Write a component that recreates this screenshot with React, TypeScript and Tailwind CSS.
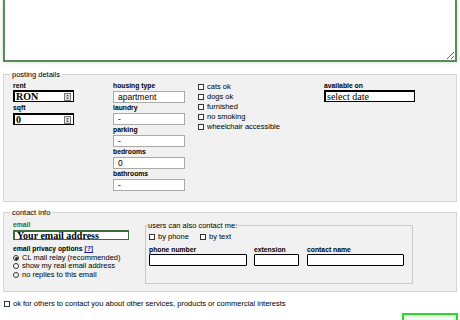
import React from 'react';

const lbl = 'block text-[6.8px] font-bold leading-[8px]';
const serif = "font-['Liberation_Serif',serif]";

const Box = ({ children }: { children: React.ReactNode }) => (
  <div className="flex items-center leading-[10px]">
    <span className="mr-[3px] inline-block h-[6px] w-[6px] border border-[#333] bg-white" />
    <span className="text-[7.5px]">{children}</span>
  </div>
);

const Radio = ({ checked, children }: { checked?: boolean; children: React.ReactNode }) => (
  <div className="flex items-center leading-[8.3px]">
    <span className="mr-[3px] flex h-[6px] w-[6px] items-center justify-center rounded-full border border-[#333] bg-white">
      {checked && <span className="h-[3px] w-[3px] rounded-full bg-[#222]" />}
    </span>
    <span className="text-[7.5px]">{children}</span>
  </div>
);

const Spinner = () => (
  <svg width="7" height="8" viewBox="0 0 7 8" className="ml-auto mr-[2px]">
    <rect x="0.5" y="0.5" width="6" height="7" fill="#e4e4e4" stroke="#777" />
    <path d="M2 3.2 L3.5 1.7 L5 3.2 Z" fill="#333" />
    <path d="M2 4.8 L3.5 6.3 L5 4.8 Z" fill="#333" />
  </svg>
);

// plain grey text field used in the housing column
const Field = ({ value }: { value: string }) => (
  <div className="mb-px mt-px flex h-[12px] w-[72px] items-center border border-[#a9a9a9] bg-white pl-[4px] text-[8.5px] leading-[10px]">
    {value}
  </div>
);

const Inset = ({ className, children }: { className: string; children?: React.ReactNode }) => (
  <div className={`flex items-center border-b border-l-2 border-r border-t-2 border-black bg-white ${className}`}>
    {children}
  </div>
);

export default function App() {
  return (
    <div className="h-[320px] w-[460px] overflow-hidden bg-white px-[3px] font-['Liberation_Sans',Arial,sans-serif] text-black">
      {/* description box, top cut off */}
      <textarea
        readOnly
        className="block h-[62px] w-full border-2 border-t-0 border-[#5b8b5b] bg-white shadow-[0_0_4px_rgba(90,160,90,0.35)] outline-none"
      />

      {/* posting details */}
      <fieldset className="mt-[8px] border border-[#d6d6d6] bg-[#f1f1f1] pb-[9px] pl-[9px] pt-[3px]">
        <legend className="ml-[-3px] px-[2px] text-[7.5px] leading-[9px]">posting details</legend>
        <div className="flex">
          <div className="w-[100px]">
            <span className={lbl}>rent</span>
            <Inset className="h-[12px] w-[61px] pl-[1px]">
              <span className={`${serif} text-[10px] font-bold leading-[10px]`}>RON</span>
              <Spinner />
            </Inset>
            <span className={`${lbl} mt-[2px]`}>sqft</span>
            <Inset className="mt-[1px] h-[12px] w-[61px] pl-[1px]">
              <span className={`${serif} text-[10px] font-bold leading-[10px]`}>0</span>
              <Spinner />
            </Inset>
          </div>

          <div className="w-[84px]">
            <span className={lbl}>housing type</span>
            <Field value="apartment" />
            <span className={lbl}>laundry</span>
            <Field value="-" />
            <span className={lbl}>parking</span>
            <Field value="-" />
            <span className={lbl}>bedrooms</span>
            <Field value="0" />
            <span className={lbl}>bathrooms</span>
            <Field value="-" />
          </div>

          <div className="w-[127px] pl-px">
            <Box>cats ok</Box>
            <Box>dogs ok</Box>
            <Box>furnished</Box>
            <Box>no smoking</Box>
            <Box>wheelchair accessible</Box>
          </div>

          <div>
            <span className={lbl}>available on</span>
            <Inset className="h-[12px] w-[91px] pl-[1px]">
              <span className={`${serif} text-[10px] leading-[10px]`}>select date</span>
            </Inset>
          </div>
        </div>
      </fieldset>

      {/* contact info */}
      <fieldset className="mt-[6px] border border-[#d6d6d6] bg-[#f1f1f1] pb-[7px] pl-[9px] pt-[4px]">
        <legend className="ml-[-3px] px-[2px] text-[7.5px] leading-[9px]">contact info</legend>
        <div className="flex items-start">
          <div className="w-[132px]">
            <span className={`${lbl} text-[#2d6e2d]`}>email</span>
            <div className="mt-px flex h-[10px] w-[116px] items-center border-b border-l-2 border-r border-t-2 border-[#3d6b3d] bg-white pl-[2px]">
              <span className={`${serif} text-[10px] font-bold leading-[10px]`}>Your email address</span>
            </div>
            <span className={`${lbl} mt-[5px]`}>
              email privacy options <span className="font-bold text-[#1a1aa6] underline">[?]</span>
            </span>
            <div className="mt-px">
              <Radio checked>CL mail relay (recommended)</Radio>
              <Radio>show my real email address</Radio>
              <Radio>no replies to this email</Radio>
            </div>
          </div>

          <fieldset className="w-[268px] border border-[#c8c8c8] pb-[17px] pl-[3px] pt-[2px]">
            <legend className="ml-[-1px] text-[7.5px] leading-[9px]">users can also contact me:</legend>
            <div className="flex">
              <div className="w-[51px]">
                <Box>by phone</Box>
              </div>
              <Box>by text</Box>
            </div>
            <div className="mt-[4px] flex">
              <div className="mr-[7px] w-[98px]">
                <span className={lbl}>phone number</span>
                <div className="h-[12px] rounded-[1px] border-[1.5px] border-black bg-white" />
              </div>
              <div className="mr-[8px] w-[45px]">
                <span className={lbl}>extension</span>
                <div className="h-[12px] rounded-[1px] border-[1.5px] border-black bg-white" />
              </div>
              <div className="w-[97px]">
                <span className={lbl}>contact name</span>
                <div className="h-[12px] rounded-[1px] border-[1.5px] border-black bg-white" />
              </div>
            </div>
          </fieldset>
        </div>
      </fieldset>

      <div className="ml-[1px] mt-[7px]">
        <Box>ok for others to contact you about other services, products or commercial interests</Box>
      </div>

      <div className="-mr-[1px] mt-[4px] flex justify-end">
        <div className="border-2 border-[#22dd22] bg-[#eefaee] px-[3px] pt-[4px]">
          <button className="h-[20px] w-[46px] border border-[#999] bg-[#e4e4e4] pt-[9px] text-[8px] leading-[8px]">
            continue
          </button>
        </div>
      </div>
    </div>
  );
}
